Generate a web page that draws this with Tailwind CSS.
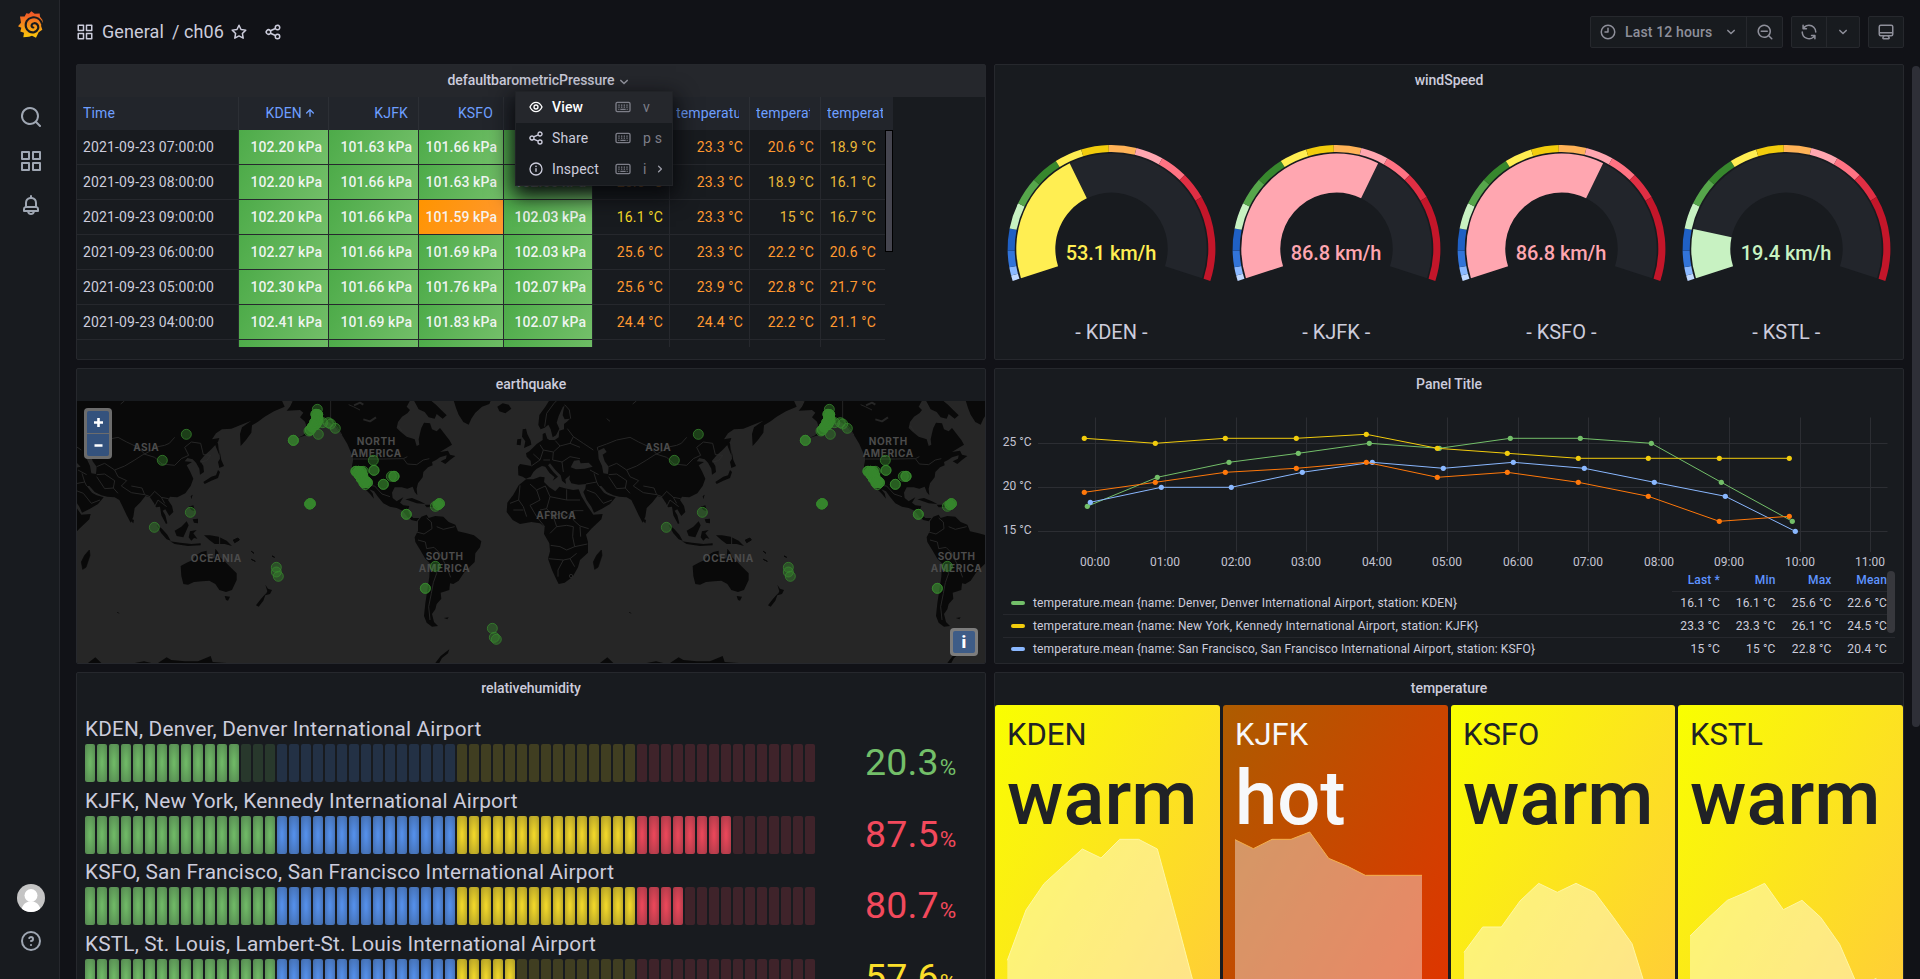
<!DOCTYPE html>
<html lang="en">
<head>
<meta charset="utf-8">
<title>ch06 - Grafana</title>
<script src="https://cdn.jsdelivr.net/npm/@tailwindcss/browser@4"></script>
</head>
<body class="w-[1920px] h-[979px] overflow-hidden bg-[#111217] text-[#ccccdc] font-['Roboto',sans-serif] text-sm tracking-[0.15px]">
<svg class="hidden">
  <symbol id="i-search" viewBox="0 0 24 24"><path d="M21.71,20.29,18,16.61A9,9,0,1,0,16.61,18l3.68,3.68a1,1,0,0,0,1.42,0A1,1,0,0,0,21.71,20.29ZM11,18a7,7,0,1,1,7-7A7,7,0,0,1,11,18Z"/></symbol>
  <symbol id="i-zoomout" viewBox="0 0 24 24"><path d="M21.71,20.29,18,16.61A9,9,0,1,0,16.61,18l3.68,3.68a1,1,0,0,0,1.42,0A1,1,0,0,0,21.71,20.29ZM11,18a7,7,0,1,1,7-7A7,7,0,0,1,11,18ZM15,10H7a1,1,0,0,0,0,2h8a1,1,0,0,0,0-2Z"/></symbol>
  <symbol id="i-apps" viewBox="0 0 24 24"><path d="M10,13H3a1,1,0,0,0-1,1v7a1,1,0,0,0,1,1h7a1,1,0,0,0,1-1V14A1,1,0,0,0,10,13ZM9,20H4V15H9ZM21,2H14a1,1,0,0,0-1,1v7a1,1,0,0,0,1,1h7a1,1,0,0,0,1-1V3A1,1,0,0,0,21,2ZM20,9H15V4h5Zm1,4H14a1,1,0,0,0-1,1v7a1,1,0,0,0,1,1h7a1,1,0,0,0,1-1V14A1,1,0,0,0,21,13Zm-1,7H15V15h5ZM10,2H3A1,1,0,0,0,2,3v7a1,1,0,0,0,1,1h7a1,1,0,0,0,1-1V3A1,1,0,0,0,10,2ZM9,9H4V4H9Z"/></symbol>
  <symbol id="i-bell" viewBox="0 0 24 24"><path d="M18,13.18V10a6,6,0,0,0-5-5.91V3a1,1,0,0,0-2,0V4.09A6,6,0,0,0,6,10v3.18A3,3,0,0,0,4,16v2a1,1,0,0,0,1,1H8.14a4,4,0,0,0,7.72,0H19a1,1,0,0,0,1-1V16A3,3,0,0,0,18,13.18ZM8,10a4,4,0,0,1,8,0v3H8Zm4,10a2,2,0,0,1-1.72-1h3.44A2,2,0,0,1,12,20Zm6-3H6V16a1,1,0,0,1,1-1H17a1,1,0,0,1,1,1Z"/></symbol>
  <symbol id="i-help" viewBox="0 0 24 24"><path d="M11.29,15.29a1.58,1.58,0,0,0-.12.15.76.76,0,0,0-.09.18.64.64,0,0,0-.06.18,1.36,1.36,0,0,0,0,.2.84.84,0,0,0,.08.38.9.9,0,0,0,.54.54.94.94,0,0,0,.76,0,.9.9,0,0,0,.54-.54A1,1,0,0,0,13,16a1,1,0,0,0-.29-.71A1,1,0,0,0,11.29,15.29ZM12,2A10,10,0,1,0,22,12,10,10,0,0,0,12,2Zm0,18a8,8,0,1,1,8-8A8,8,0,0,1,12,20ZM12,7A3,3,0,0,0,9.4,8.5a1,1,0,1,0,1.73,1A1,1,0,0,1,12,9a1,1,0,0,1,0,2,1,1,0,1,0,0,2,3,3,0,0,0,0-6Z"/></symbol>
  <symbol id="i-clock" viewBox="0 0 24 24"><path d="M12,2A10,10,0,1,0,22,12,10,10,0,0,0,12,2Zm0,18a8,8,0,1,1,8-8A8,8,0,0,1,12,20ZM12,6a1,1,0,0,0-1,1v4H8a1,1,0,0,0,0,2h4a1,1,0,0,0,1-1V7A1,1,0,0,0,12,6Z"/></symbol>
  <symbol id="i-down" viewBox="0 0 24 24"><path d="M17,9.17a1,1,0,0,0-1.41,0L12,12.71,8.46,9.17a1,1,0,0,0-1.41,0,1,1,0,0,0,0,1.42l4.24,4.24a1,1,0,0,0,1.42,0L17,10.59A1,1,0,0,0,17,9.17Z"/></symbol>
  <symbol id="i-right" viewBox="0 0 24 24"><path d="M14.83,11.29,10.59,7.05a1,1,0,0,0-1.42,0,1,1,0,0,0,0,1.41L12.71,12,9.17,15.54a1,1,0,0,0,0,1.41,1,1,0,0,0,.71.29,1,1,0,0,0,.71-.29l4.24-4.24A1,1,0,0,0,14.83,11.29Z"/></symbol>
  <symbol id="i-up" viewBox="0 0 24 24"><path d="M17.71,11.29l-5-5a1,1,0,0,0-.33-.21,1,1,0,0,0-.76,0,1,1,0,0,0-.33.21l-5,5a1,1,0,0,0,1.42,1.42L11,9.41V17a1,1,0,0,0,2,0V9.41l3.29,3.3a1,1,0,0,0,1.42,0A1,1,0,0,0,17.71,11.29Z"/></symbol>
  <symbol id="i-sync" viewBox="0 0 24 24"><path d="M19.91,15.51H15.38a1,1,0,0,0,0,2h2.4A8,8,0,0,1,4,12a1,1,0,1,0-2,0,10,10,0,0,0,16.88,7.23V21a1,1,0,0,0,2,0V16.5A1,1,0,0,0,19.91,15.51ZM12,2A10,10,0,0,0,5.12,4.77V3a1,1,0,0,0-2,0V7.5a1,1,0,0,0,1,1h4.5a1,1,0,0,0,0-2H6.22A8,8,0,0,1,20,12a1,1,0,0,0,2,0A10,10,0,0,0,12,2Z"/></symbol>
  <symbol id="i-monitor" viewBox="0 0 24 24"><path d="M19,2H5A3,3,0,0,0,2,5V15a3,3,0,0,0,3,3H7.64l-.58,1a2,2,0,0,0,0,2,2,2,0,0,0,1.75,1h6.46A2,2,0,0,0,17,21a2,2,0,0,0,0-2l-.59-1H19a3,3,0,0,0,3-3V5A3,3,0,0,0,19,2ZM8.77,20,10,18H14l1.2,2ZM20,15a1,1,0,0,1-1,1H5a1,1,0,0,1-1-1V14H20Zm0-3H4V5A1,1,0,0,1,5,4H19a1,1,0,0,1,1,1Z"/></symbol>
  <symbol id="i-share" viewBox="0 0 24 24"><path d="M18,14a4,4,0,0,0-3.08,1.48l-5.1-2.35a3.64,3.64,0,0,0,0-2.26l5.1-2.35A4,4,0,1,0,14,6a4.17,4.17,0,0,0,.07.71L8.79,9.14a4,4,0,1,0,0,5.72l5.28,2.43A4.17,4.17,0,0,0,14,18a4,4,0,1,0,4-4ZM18,4a2,2,0,1,1-2,2A2,2,0,0,1,18,4ZM6,14a2,2,0,1,1,2-2A2,2,0,0,1,6,14Zm12,6a2,2,0,1,1,2-2A2,2,0,0,1,18,20Z"/></symbol>
  <symbol id="i-star" viewBox="0 0 24 24"><path d="M12 3L14.700 8.700 21 9.500 16.500 13.900 17.600 20.200 12 17.200 6.400 20.200 7.500 13.900 3 9.500 9.300 8.700Z" fill="none" stroke="currentColor" stroke-width="2" stroke-linejoin="round"/></symbol>
  <symbol id="i-eye" viewBox="0 0 24 24"><path d="M21.92,11.6C19.9,6.91,16.1,4,12,4S4.1,6.91,2.08,11.6a1,1,0,0,0,0,.8C4.1,17.09,7.9,20,12,20s7.9-2.91,9.92-7.6A1,1,0,0,0,21.92,11.6ZM12,18c-3.17,0-6.17-2.29-7.9-6C5.83,8.29,8.83,6,12,6s6.17,2.29,7.9,6C18.17,15.71,15.17,18,12,18ZM12,8a4,4,0,1,0,4,4A4,4,0,0,0,12,8Zm0,6a2,2,0,1,1,2-2A2,2,0,0,1,12,14Z"/></symbol>
  <symbol id="i-info" viewBox="0 0 24 24"><path d="M12,2A10,10,0,1,0,22,12,10,10,0,0,0,12,2Zm0,18a8,8,0,1,1,8-8A8,8,0,0,1,12,20ZM12,10.500a1,1,0,0,0-1,1v4a1,1,0,0,0,2,0v-4A1,1,0,0,0,12,10.500Z"/><circle cx="12" cy="8" r="1.200"/></symbol>
  <symbol id="i-keyboard" viewBox="0 0 24 24"><rect x="1.500" y="5" width="21" height="14" rx="2" fill="none" stroke="currentColor" stroke-width="2"/><path d="M5 9.300h2M9 9.300h2M13 9.300h2M17 9.300h2M5 12.300h2M9 12.300h2M13 12.300h2M17 12.300h2M5 15.500h1.500M8 15.500h8M17.500 15.500H19" stroke="currentColor" stroke-width="1.800"/></symbol>
</svg>

<div class="relative flex w-[1920px] h-[979px]">
  <!-- side menu -->
  <nav class="flex w-[60px] h-full shrink-0 flex-col items-center border-r border-[#26282d] bg-[#181b1f] pl-[3px] text-[#9fa7b3]">
    <svg class="mt-[11px] mr-0.5 h-[27px] w-[25px]" viewBox="53 34 75 80">
      <defs><linearGradient id="lg" x1="0" y1="0" x2="0" y2="1"><stop offset="0.100" stop-color="#f05a28"/><stop offset="1" stop-color="#fbca0a"/></linearGradient></defs>
      <path fill="url(#lg)" d="M93 34L103 42 118 41 119 51 126 60 128 71 122 78 126 90 115 97 107 114 95 108 86 111 69 112 71 99 60 95 63 84 53 79 62 69 59 50 73 50 78 40 86 42Z"/>
      <path fill="none" stroke="#181b1f" stroke-width="6.500" stroke-linecap="round" d="M127 76C121 58 108 50 95 53C80 56 74 69 77 82C80 94 92 100 102 97C113 94 117 82 111 74C106 68 96 69 94 76C93 80 96 83 99 83"/>
    </svg>
    <svg class="mt-[67px] size-6 fill-current"><use href="#i-search"/></svg>
    <svg class="mt-5 size-6 fill-current"><use href="#i-apps"/></svg>
    <svg class="mt-5 size-6 fill-current"><use href="#i-bell"/></svg>
    <div class="mt-auto size-7 overflow-hidden rounded-full bg-[#c4c4c4]">
      <svg class="size-7 fill-white" viewBox="0 0 28 28"><circle cx="14" cy="11.500" r="6.500"/><path d="M4 28C5 20 9 17.500 14 17.500S23 20 24 28Z"/></svg>
    </div>
    <svg class="mt-[17px] mb-[26px] size-6 fill-current"><use href="#i-help"/></svg>
  </nav>

  <main class="flex min-w-0 flex-1 flex-col px-4">
    <!-- toolbar -->
    <header class="flex h-16 shrink-0 items-center justify-between">
      <div class="flex h-9 items-center text-lg tracking-[0.1px] text-[#ccccdc]">
        <svg class="size-[18px] fill-current"><use href="#i-apps"/></svg>
        <span class="ml-2">General</span><span class="ml-2">/ ch06</span>
        <svg class="ml-[6px] size-[18px] fill-current"><use href="#i-star"/></svg>
        <svg class="ml-4 size-[18px] fill-current"><use href="#i-share"/></svg>
      </div>
      <div class="flex h-8 gap-2 font-medium text-[#8e8f9a]">
        <div class="flex divide-x divide-[#26282d] rounded-xs border border-[#26282d] bg-[#181b1f]">
          <div class="flex w-[156px] items-center pl-2"><svg class="size-[18px] fill-current"><use href="#i-clock"/></svg><span class="ml-2">Last 12 hours</span><svg class="ml-[10px] size-[18px] fill-current"><use href="#i-down"/></svg></div>
          <div class="flex w-[35px] items-center justify-center"><svg class="size-[18px] fill-current"><use href="#i-zoomout"/></svg></div>
        </div>
        <div class="flex divide-x divide-[#26282d] rounded-xs border border-[#26282d] bg-[#181b1f]">
          <div class="flex w-[35px] items-center justify-center"><svg class="size-[18px] fill-current"><use href="#i-sync"/></svg></div>
          <div class="flex w-[32px] items-center justify-center"><svg class="size-[18px] fill-current"><use href="#i-down"/></svg></div>
        </div>
        <div class="flex w-9 items-center justify-center rounded-xs border border-[#26282d] bg-[#181b1f]"><svg class="size-[18px] fill-current"><use href="#i-monitor"/></svg></div>
      </div>
    </header>

    <div class="grid grid-cols-[910px_910px] grid-rows-[296px_296px_334px] gap-2">
      <!-- pressure table -->
      <section class="relative flex flex-col rounded-xs border border-[#26282d] bg-[#181b1f]">
        <h2 class="flex h-8 shrink-0 items-center justify-center bg-[#25272c] pb-0.5 pl-[19px] font-medium tracking-[-0.04px]">defaultbarometricPressure<svg class="ml-px mt-1 size-[18px] fill-[#9a9ba6]"><use href="#i-down"/></svg></h2>
        <div id="table" class="relative h-[250px] w-[816px] overflow-hidden"></div>
        <div class="absolute left-[808px] top-[65px] h-[122px] w-2 border border-black bg-[#45454f]"></div>
        <div class="absolute left-[438px] top-[26px] z-10 w-[158px] border border-[#212327] bg-[#181b1f] shadow-[0_8px_20px_3px_#08090c]">
          <div class="flex h-[31px] items-center bg-[#25272c] pb-px pl-3 font-medium text-white"><svg class="size-4 fill-current"><use href="#i-eye"/></svg><span class="ml-2 w-[63px]">View</span><svg class="size-4 text-[#7d7e88]"><use href="#i-keyboard"/></svg><span class="ml-3 font-normal text-[#7d7e88]">v</span></div>
          <div class="flex h-[31px] items-center pb-px pl-3"><svg class="size-4 fill-current"><use href="#i-share"/></svg><span class="ml-2 w-[63px]">Share</span><svg class="size-4 text-[#7d7e88]"><use href="#i-keyboard"/></svg><span class="ml-3 text-[#7d7e88]">p s</span></div>
          <div class="flex h-[31px] items-center pb-px pl-3"><svg class="size-4 fill-current"><use href="#i-info"/></svg><span class="ml-2 w-[63px]">Inspect</span><svg class="size-4 text-[#7d7e88]"><use href="#i-keyboard"/></svg><span class="ml-3 text-[#7d7e88]">i</span><svg class="ml-[5px] size-4 fill-[#9a9ba6]"><use href="#i-right"/></svg></div>
        </div>
      </section>

      <!-- wind speed gauges -->
      <section class="flex flex-col rounded-xs border border-[#26282d] bg-[#181b1f]">
        <h2 class="flex h-8 shrink-0 items-center justify-center pb-0.5 font-medium tracking-[-0.04px]">windSpeed</h2>
        <div id="gauges" class="flex pl-1"></div>
      </section>

      <!-- earthquake map -->
      <section class="relative flex flex-col overflow-hidden rounded-xs border border-[#26282d] bg-[#181b1f]">
        <h2 class="flex h-8 shrink-0 items-center justify-center pb-0.5 font-medium tracking-[-0.04px]">earthquake</h2>
        <svg class="h-[262px] w-[908px] bg-[#262626]" viewBox="21 123 2724 786">
          <defs>
            <g id="world" fill="#090909" stroke="none">
              <!-- North America -->
              <path d="M640 118L668 124 660 140 650 152 690 150 700 158 690 172 705 185 712 206 700 226 682 234 720 222 742 200 752 192 775 186 792 196 806 212 820 232 832 252 842 275 850 297 846 318 848 338 860 360 872 372 886 388 900 402 912 416 908 400 898 388 912 394 925 412 940 430 960 440 980 444 998 452 1012 470 1024 480 1040 484 1048 474 1030 474 1018 462 1014 450 1018 438 1000 436 990 428 1000 412 980 424 968 414 966 398 974 382 995 382 1012 386 1028 380 1034 396 1042 406 1040 386 1044 370 1058 352 1060 336 1074 322 1088 316 1086 306 1098 300 1110 292 1130 286 1128 296 1112 304 1126 312 1140 300 1156 288 1140 284 1134 272 1110 276 1126 266 1146 254 1138 240 1124 222 1110 204 1100 214 1086 208 1080 190 1062 188 1054 204 1050 220 1046 238 1048 254 1040 258 1034 238 1010 230 990 214 980 204 984 186 996 170 1012 160 1020 150 1010 140 1022 118Z"/>
              <path d="M1030 118L1078 118 1098 134 1116 152 1130 166 1118 176 1100 162 1094 176 1076 172 1064 156 1046 148Z"/>
              <path d="M1150 118L1264 118 1258 132 1236 140 1216 158 1204 176 1196 194 1180 186 1166 164 1158 144Z"/>
              <path d="M1282 140L1298 130 1316 134 1324 146 1306 160 1288 154Z"/>
              <path d="M1006 418L1026 414 1050 424 1066 432 1040 430ZM1064 434L1090 434 1096 440 1070 442Z"/>
              <!-- South America -->
              <path d="M1044 484L1054 470 1070 464 1076 474 1096 468 1120 470 1136 486 1156 494 1164 514 1190 520 1212 526 1234 544 1230 562 1216 580 1214 606 1198 622 1182 638 1166 662 1150 672 1140 670 1138 690 1112 698 1114 716 1100 732 1096 748 1086 762 1092 786 1104 798 1086 800 1070 788 1062 768 1066 730 1072 690 1078 650 1080 610 1066 596 1052 572 1036 546 1034 532 1044 512Z"/>
              <path d="M1122 774L1136 772 1132 778ZM1096 909L1112 888 1138 868 1134 880 1116 894 1108 909Z"/>
            </g>
            <g id="east" fill="#090909">
              <!-- Europe and Asia -->
              <path d="M60 118L46 140 28 165 25 195 32 208 44 203 55 194 62 208 68 232 78 226 88 206 80 188 86 168 98 142 104 136 100 152 98 166 104 178 120 176 110 186 102 192 102 208 88 212 86 232 74 240 58 240 52 236 46 218 38 222 38 240 20 252 8 264 -2 274 -12 280 -10 290 2 302 4 318 -30 312 -36 320 -35 346 -22 350 -12 356 2 350 10 336 20 326 36 318 46 320 58 338 74 352 68 362 84 350 70 336 54 316 60 310 76 330 92 346 96 362 108 372 106 358 120 346 118 358 124 370 146 374 168 372 166 386 160 396 170 420 184 440 192 458 216 446 240 432 257 412 236 406 222 398 206 378 214 378 230 396 250 406 268 410 290 412 304 420 314 440 326 466 338 488 346 470 350 444 368 426 382 408 396 412 408 430 414 442 426 440 430 466 444 492 448 490 442 466 434 452 442 448 454 468 466 456 462 438 450 420 456 410 478 412 502 400 518 378 526 356 516 334 506 316 522 306 500 304 508 294 524 298 534 308 544 326 546 344 558 336 556 318 546 302 560 286 580 268 600 246 604 234 582 238 594 220 612 208 640 206 666 196 700 182 672 202 666 222 668 258 684 240 700 218 702 196 722 184 740 170 768 154 800 140 790 118Z"/>
              <path d="M-22 208L-12 206 -8 222 2 242 4 254 -18 264 -14 244 -24 230ZM-38 238L-26 236 -28 256 -40 254Z"/>
              <path d="M604 268L610 300 618 318 604 324 600 306 606 296ZM600 330L606 336 600 354 580 362 560 372 556 366 580 350 594 346ZM588 246L600 250 604 286 596 266Z"/>
              <path d="M340 476L348 480 346 490 338 482ZM518 408L524 404 520 418ZM512 440L526 436 530 454 520 450ZM524 478L540 476 540 490 528 488Z"/>
              <path d="M416 494L432 506 448 524 458 542 446 538 430 520ZM456 544L486 548 520 552 548 550 548 556 510 558 470 552ZM470 512L490 500 506 484 512 496 504 514 496 532 476 528ZM516 514L536 510 526 520 538 536 528 534 520 542 512 532ZM558 526L576 526 602 530 626 542 642 558 620 552 604 552 590 552 574 540Z"/>
              <path d="M646 540L660 534 664 540 650 548ZM700 574L708 580ZM700 598L712 604ZM762 588L770 592Z" stroke="#090909" stroke-width="3"/>
              <!-- Australia and New Zealand -->
              <path d="M488 618L506 608 524 600 534 586 550 576 566 572 566 588 580 598 590 594 592 566 600 576 606 592 620 604 636 620 656 640 656 660 642 690 624 696 604 690 592 672 574 662 552 664 528 666 510 674 496 672 490 648ZM620 708L636 710 630 722 624 720ZM742 674L750 686 762 690 756 702 742 706 748 694ZM744 700L736 722 722 740 714 736 728 718Z"/>
              <!-- Africa -->
              <path d="M-12 358L10 358 30 350 44 352 42 366 58 382 76 394 88 380 110 386 130 390 146 388 154 408 172 438 190 464 218 462 214 478 184 506 168 524 174 546 174 578 150 600 144 622 128 650 104 668 86 672 78 656 66 630 54 596 60 574 58 550 42 522 44 500 30 490 4 486 -30 492 -52 480 -70 456 -68 428 -50 404 -34 376Z"/>
              <path d="M214 570L216 586 204 622 194 628 190 606 200 586ZM298 756L302 760Z" stroke="#090909" stroke-width="2"/>
              <path d="M210 909L232 892 250 909ZM350 909L378 904 400 909ZM420 909L446 892 460 900 500 904 540 904 578 888 584 906 626 909Z"/>
              <!-- inland seas -->
              <g fill="#262626"><path d="M122 322L132 302 148 300 152 310 176 308 188 320 164 326 138 328ZM204 272L222 264 230 276 218 284 224 304 236 320 234 342 220 340 216 318 206 296Z"/></g>
            </g>
            <g id="borders" fill="none" stroke="#2b2b2b" stroke-width="2.500" stroke-linejoin="round">
              <path d="M782 118V180L800 200 816 226M850 297H940L1000 296 1012 312 1040 314 1060 300 1078 296M872 372L896 376 914 378 936 402 960 410M1040 516L1062 522 1086 506 1084 486 1070 474M1044 540L1066 546 1070 566 1092 562 1108 578 1120 602 1130 620 1142 652M1082 610L1100 640 1090 668 1084 700 1076 740 1080 780M1100 500L1120 508 1154 500"/>
              <path d="M984 196L996 214M870 150L850 140 836 134M1000 296L1012 290"/>
              <path d="M880 178L900 184 918 172M852 136L870 128 880 134" stroke="#262626" stroke-width="6"/>
            </g>
            <g id="eborders" fill="none" stroke="#2d2d2d" stroke-width="2.500" stroke-linejoin="round">
              <path d="M0 372L20 390 46 378M20 390L30 420 0 436M46 378L60 410 110 420V388M110 420H150M60 410L50 446 70 470 90 460 110 470 130 452 160 452M0 436L20 470 44 500M50 446L30 450M130 452L130 480 150 498 176 506M70 470L80 500 60 520M80 500L110 496 130 500 128 530 134 560 110 570 90 560 62 556M134 560L172 552M56 596L100 600 120 596 140 580M100 600L84 630 84 650M120 596L134 620M150 500L152 530M-30 376L-34 420-60 430M-34 420L-20 440-10 470M-50 450L-20 450"/>
              <path d="M4 318L30 300 10 282M30 300L40 270 30 254M40 270L70 276 90 258 76 242M90 258L120 250 130 230 112 206M70 276L68 300 96 306 120 290 150 296M96 306L100 336M60 300L40 300M104 134L118 150 122 176M44 200L50 160 72 130 84 118M130 230L160 250 190 270M120 250L150 262"/>
              <path d="M168 372L200 366 206 378M180 330L206 344M200 366L192 340M170 390L196 400 220 430 246 420M236 344L260 342 290 362 286 384 260 386 236 350M286 384L300 400M204 272L202 262 230 252 260 240 300 232 326 246 360 262 380 282M236 320L260 310 290 330 320 318 350 300 378 282 410 292 432 312 470 316 490 296 512 286 500 262 520 246 548 250 556 284 578 286 566 302 546 306M290 330L300 350 326 362 310 378 340 398 380 404 396 410M380 404L372 384 340 378M396 410L410 394 430 412 452 416M410 440L420 420 446 440M430 412L440 430M380 282L420 260 440 256 454 250 470 232M605 530V552"/>
              <circle cx="123" cy="648" r="5"/><path d="M308 132L320 122M230 176L240 184"/>
            </g>
            <g id="names" font-family="Inter, 'Open Sans', sans-serif" font-weight="700" font-size="30" fill="#4c4c4c" text-anchor="middle">
              <text x="918" y="255" textLength="116">NORTH</text><text x="918" y="291" textLength="152">AMERICA</text>
              <text x="1123" y="600" textLength="112">SOUTH</text><text x="1123" y="637" textLength="153">AMERICA</text>
              <text x="1458" y="477" textLength="118">AFRICA</text><text x="1764" y="272" textLength="76">ASIA</text><text x="1974" y="606" textLength="151">OCEANIA</text>
            </g>
          </defs>
          <g id="tiles"></g>
          <g id="quakes"></g>
        </svg>
        <div class="absolute left-[7px] top-[39px] flex flex-col gap-px rounded-[4px] bg-[#6c6c6c] p-[3px] font-bold text-white">
          <div class="flex size-[22px] items-center justify-center rounded-t-xs bg-[#34527d]"><svg class="size-[9px]" viewBox="0 0 9 9"><path d="M4.500 0V9M0 4.500H9" stroke="#fff" stroke-width="2.600"/></svg></div>
          <div class="flex size-[22px] items-center justify-center rounded-b-xs bg-[#34527d]"><svg class="size-[9px]" viewBox="0 0 9 9"><path d="M0.500 4.500H8.500" stroke="#fff" stroke-width="2.600"/></svg></div>
        </div>
        <div class="absolute bottom-[7px] right-[7px] rounded-[4px] bg-[#7d7d7d] p-[3px]"><div class="flex size-[22px] items-center justify-center rounded-xs bg-[#3e5c87] text-[17px] font-black leading-none text-white">i</div></div>
      </section>

      <!-- time series -->
      <section class="flex flex-col rounded-xs border border-[#26282d] bg-[#181b1f]">
        <h2 class="flex h-8 shrink-0 items-center justify-center pb-0.5 font-medium tracking-[-0.04px]">Panel Title</h2>
        <svg class="h-[169px] w-[908px] shrink-0" viewBox="995 401 908 169">
          <g id="plot"></g>
        </svg>
        <div class="relative ml-2 w-[892px] text-xs">
          <div class="ml-[669px] grid h-[22px] grid-cols-[48px_55.500px_56px_55.500px] border-b border-[#26282d] pb-0.5 text-right font-medium leading-[20px] text-[#5f94ff]"><span>Last *</span><span>Min</span><span>Max</span><span>Mean</span></div>
          <div id="legend"></div>
          <div class="absolute right-0 top-[1px] h-[62px] w-2 rounded-full bg-[#37383d]"></div>
        </div>
      </section>

      <!-- humidity bars -->
      <section class="flex flex-col rounded-xs border border-[#26282d] bg-[#181b1f]">
        <h2 class="flex h-8 shrink-0 items-center justify-center pb-0.5 font-medium tracking-[-0.04px]">relativehumidity</h2>
        <div id="bars" class="flex flex-col pl-2 pt-[7px]"></div>
      </section>

      <!-- temperature stats -->
      <section class="flex flex-col rounded-xs border border-[#26282d] bg-[#181b1f]">
        <h2 class="flex h-8 shrink-0 items-center justify-center pb-0.5 font-medium tracking-[-0.04px]">temperature</h2>
        <div class="grid h-[300px] grid-cols-[225px_225px_224px_225px] gap-[3px] tracking-normal">
          <div class="relative overflow-hidden rounded-[3px] bg-[linear-gradient(120deg,#f9ff00,#ffcc39)] text-[#202226]">
            <svg class="absolute inset-0 h-full w-full" viewBox="15 120 675 900"><path d="M52 1030V886L108 735 162 656 220 603 277 552 333 579 389 523 446 523 502 552 558 757 614 968 620 1030Z" fill="#fff" fill-opacity=".42"/><path d="M52 886L108 735 162 656 220 603 277 552 333 579 389 523 446 523 502 552 558 757 614 968" fill="none" stroke="#fff7a0" stroke-width="3"/></svg>
            <div class="relative pl-3 pt-3"><div class="text-[31px] leading-[36px] font-normal">KDEN</div><div class="text-[76px] leading-[90px] font-medium">warm</div></div>
          </div>
          <div class="relative overflow-hidden rounded-[3px] bg-[linear-gradient(120deg,#ad5c00,#e03400)] text-[#f7f8fa]">
            <svg class="absolute inset-0 h-full w-full" viewBox="699 120 675 900"><path d="M735 1030V524L790 551 846 523 903 523 959 501 1016 580 1073 604 1126 631 1296 631V1030Z" fill="#fff" fill-opacity=".4"/><path d="M735 524L790 551 846 523 903 523 959 501 1016 580 1073 604 1126 631 1296 631" fill="none" stroke="#f5b04c" stroke-width="3"/></svg>
            <div class="relative pl-3 pt-3"><div class="text-[31px] leading-[36px] font-normal">KJFK</div><div class="text-[76px] leading-[90px] font-medium">hot</div></div>
          </div>
          <div class="relative overflow-hidden rounded-[3px] bg-[linear-gradient(120deg,#f9ff00,#ffcc39)] text-[#202226]">
            <svg class="absolute inset-0 h-full w-full" viewBox="33 120 672 900"><path d="M72 1030V862L128 786 184 786 240 708 296 655 352 682 408 655 464 682 520 757 576 836 609 942 636 1030Z" fill="#fff" fill-opacity=".42"/><path d="M72 862L128 786 184 786 240 708 296 655 352 682 408 655 464 682 520 757 576 836 609 942 636 1030" fill="none" stroke="#fff7a0" stroke-width="3"/></svg>
            <div class="relative pl-3 pt-3"><div class="text-[31px] leading-[36px] font-normal">KSFO</div><div class="text-[76px] leading-[90px] font-medium">warm</div></div>
          </div>
          <div class="relative overflow-hidden rounded-[3px] bg-[linear-gradient(120deg,#f9ff00,#ffcc39)] text-[#202226]">
            <svg class="absolute inset-0 h-full w-full" viewBox="714 120 675 900"><path d="M750 1030V813L806 758 862 706 918 682 974 655 1030 734 1086 706 1142 757 1199 838 1244 942 1255 965 1309 940V1030Z" fill="#fff" fill-opacity=".42"/><path d="M750 813L806 758 862 706 918 682 974 655 1030 734 1086 706 1142 757 1199 838 1244 942 1255 965 1309 940" fill="none" stroke="#fff7a0" stroke-width="3"/></svg>
            <div class="relative pl-3 pt-3"><div class="text-[31px] leading-[36px] font-normal">KSTL</div><div class="text-[76px] leading-[90px] font-medium">warm</div></div>
          </div>
        </div>
      </section>
    </div>
  </main>
  <div class="absolute right-0 top-[66px] h-[661px] w-2 rounded-full bg-[#2e2f37]"></div>
</div>

<script>
const $ = id => document.getElementById(id);

// Pressure / temperature table; cells fully behind the open menu stay empty
const O = 'text-[#ff9830]', Y = 'text-[#eab839]', B = 'text-[#fade2a]';
const rows = [
  ['2021-09-23 07:00:00','102.20','101.63','101.66','',['',O],['23.3',O],['20.6',O],['18.9',Y]],
  ['2021-09-23 08:00:00','102.20','101.66','101.63','102.00',['20.6',O],['23.3',O],['18.9',Y],['16.1',Y]],
  ['2021-09-23 09:00:00','102.20','101.66','101.59','102.03',['16.1',B],['23.3',O],['15',Y],['16.7',Y]],
  ['2021-09-23 06:00:00','102.27','101.66','101.69','102.03',['25.6',O],['23.3',O],['22.2',O],['20.6',O]],
  ['2021-09-23 05:00:00','102.30','101.66','101.76','102.07',['25.6',O],['23.9',O],['22.8',O],['21.7',O]],
  ['2021-09-23 04:00:00','102.41','101.69','101.83','102.07',['24.4',O],['24.4',O],['22.2',O],['21.1',O]],
  ['','','','','',['',O],['',O],['',O],['',O]]
];
let t = `<div class="grid grid-cols-[162px_90px_90px_85px_89px_77px_80px_71px_72px] h-[33px] bg-[#22252b] text-[#6e9fff] leading-[32px] whitespace-nowrap">`;
['Time','KDEN','KJFK','KSFO','','','temperature','temperature','temperature'].forEach((h, i) => {
  const right = i > 0 && i < 5;
  t += `<div class="${i < 8 ? 'border-r border-[#2c2f35]' : ''} pl-1.5 pr-[10px]"><div class="flex overflow-hidden ${right ? 'justify-end' : ''}">${h}${i === 1 ? '<svg class="mt-2 size-4 fill-current"><use href="#i-up"/></svg>' : ''}</div></div>`;
});
t += '</div>';
for (const r of rows) {
  t += `<div class="grid grid-cols-[162px_90px_90px_85px_89px_77px_80px_71px_64px] h-[35px] leading-[34px] whitespace-nowrap"><div class="border-r border-b border-[#26282d] pl-1.5">${r[0]}</div>`;
  for (let i = 1; i < 5; i++) {
    const bg = r[i] === '101.59' ? 'bg-[linear-gradient(120deg,#ff9400,#ff9830)]' : 'bg-[linear-gradient(120deg,#4dab49,#73bf69)]';
    t += `<div class="border-r border-b border-[#26282d] bg-clip-padding pr-1.5 text-right font-medium tracking-[0.06px] text-[#f7f8fa]/95 ${bg}">${r[i] ? r[i] + ' kPa' : ''}</div>`;
  }
  for (let i = 5; i < 9; i++)
    t += `<div class="border-b border-[#26282d] text-right ${i < 8 ? 'border-r pr-1.5' : 'pr-[9px]'} ${r[i][1]}">${r[i][0] ? r[i][0] + ' °C' : ''}</div>`;
  t += '</div>';
}
$('table').innerHTML = t;

// Gauges: 216° sweep, scale 0..140
const pt = (r, v) => { const a = (162 + v / 140 * 216) * Math.PI / 180; return (112.5 + r * Math.cos(a)).toFixed(2) + ' ' + (151.8 + r * Math.sin(a)).toFixed(2); };
const arc = (r0, r1, a, b, c) => { const big = (b - a) / 140 * 216 > 180 ? 1 : 0; return `<path fill="${c}" d="M${pt(r1,a)}A${r1} ${r1} 0 ${big} 1 ${pt(r1,b)}L${pt(r0,b)}A${r0} ${r0} 0 ${big} 0 ${pt(r0,a)}Z"/>`; };
const th = [[0,'#C0D8FF'],[2,'#8AB8FF'],[5,'#3274D9'],[11,'#1F60C4'],[19,'#C8F2C2'],[28.5,'#56A64B'],[38.7,'#37872D'],[49,'#FFEE52'],[59,'#F2CC0C'],[69,'#FFB357'],[79,'#FFA6B0'],[89,'#FF7383'],[99,'#E02F44'],[109,'#C4162A'],[140,'']];
$('gauges').innerHTML = [['KDEN',53.1,'#FFEE52'],['KJFK',86.8,'#FFA6B0'],['KSFO',86.8,'#FFA6B0'],['KSTL',19.4,'#C8F2C2']].map(([n, v, c]) => {
  let s = arc(56.2, 95.2, 0, 140, '#22252b') + arc(56.2, 95.2, 0, v, c);
  for (let i = 0; i < 14; i++) s += arc(96.8, 103.9, th[i][0], th[i + 1][0], th[i][1]);
  return `<svg class="h-[260px] w-[225px]" viewBox="0 0 225 260">${s}<text x="112" y="163" text-anchor="middle" font-size="20" font-weight="500" letter-spacing="-0.080" fill="${c}">${v} km/h</text><text x="112.300" y="242" text-anchor="middle" font-size="20" letter-spacing="0" fill="#ccccdc">- ${n} -</text></svg>`;
}).join('');

// Map: single quakes drawn once, dense swarms drawn several times so they build up to solid green
$('tiles').innerHTML = [-1536, 0, 1536].map(x => `<g transform="translate(${x} 0)"><use href="#world"/><use href="#borders"/><g transform="translate(1380 0)"><use href="#east"/><use href="#eborders"/></g><use href="#names"/></g>`).join('');
const single = [[349,223],[277,301],[361,457],[253,502],[742,148],[745,223],[758,188],[775,188],[782,192],[796,205],[910,301],[912,331],[912,331],[940,373],[940,373],[964,349],[1096,439],[1096,619],[1066,685],[1066,685],[1267,805],[1273,832],[1279,838],[619,622],[619,636],[625,649],[886,374],[1009,463],[1009,463],[717,213],[880,334]];
const swarm = [[670,241],[738,163],[743,164],[742,170],[740,176],[744,178],[738,182],[742,186],[734,188],[737,194],[732,196],[727,201],[721,210],[858,334],[862,338],[866,334],[870,340],[874,335],[868,346],[874,350],[878,347],[874,356],[880,360],[884,364],[888,364],[892,368],[882,368],[972,349],[719,432],[721,431],[1104,434],[1108,431]];
const q = [...single, ...swarm, ...swarm, ...swarm];
$('quakes').innerHTML = [0, 1536].map(d => q.map(([x, y]) => `<circle cx="${x + d}" cy="${y}" r="15" fill="#37872d" fill-opacity=".42" stroke="#37872d" stroke-opacity=".9" stroke-width="2.500"/>`).join('')).join('');

// Time series
let p = '';
for (let i = 0; i < 12; i++) {
  const x = Math.floor(1095.3 + i * 70.47) + .5;
  p += `<path d="M${x} 417.500V552" stroke="#2c2e33"/><text x="${x - .5}" y="566" text-anchor="middle" font-size="12" letter-spacing="0" fill="#c4c4d2">${String(i).padStart(2, '0')}:00</text>`;
}
[[25,443.5],[20,487.5],[15,531.5]].forEach(([v, y]) => p += `<path d="M1038 ${y}H1887.500" stroke="#2c2e33"/><text x="1031.700" y="${y + 2.5}" text-anchor="end" font-size="12" letter-spacing="0.050" fill="#c4c4d2">${v} °C</text>`);
const series = [
  ['#73BF69',[[292,439],[502,352],[717,307],[925,280],[1138,250],[1348,265],[1561,235],[1771,235],[1984,250],[2194,367],[2407,484]]],
  ['#F2CC0C',[[283,235],[496,250],[706,235],[919,235],[1129,223],[1342,265],[1552,280],[1765,295],[1975,295],[2188,295],[2398,295]]],
  ['#8AB8FF',[[301,427],[514,382],[724,382],[937,337],[1147,307],[1360,325],[1570,307],[1783,325],[1993,367],[2206,409],[2416,514]]],
  ['#FF780A',[[283,397],[496,367],[706,337],[919,325],[1129,307],[1342,352],[1552,337],[1765,367],[1975,409],[2188,484],[2398,469]]]
];
for (const [c, a] of series) {
  const m = a.map(([x, y]) => [(990 + x / 3).toFixed(1), (360 + y / 3).toFixed(1)]);
  p += `<polyline fill="none" stroke="${c}" points="${m.map(z => z.join(',')).join(' ')}"/>` + m.map(z => `<circle cx="${z[0]}" cy="${z[1]}" r="2.600" fill="${c}"/>`).join('');
}
$('plot').innerHTML = p;
$('legend').innerHTML = [
  ['#73BF69','Denver, Denver International Airport, station: KDEN','16.1','16.1','25.6','22.6'],
  ['#F2CC0C','New York, Kennedy International Airport, station: KJFK','23.3','23.3','26.1','24.5'],
  ['#8AB8FF','San Francisco, San Francisco International Airport, station: KSFO','15','15','22.8','20.4']
].map((r, i) => `<div class="grid h-[23px] grid-cols-[669px_48px_55.500px_56px_55.500px] items-center text-right ${i < 2 ? 'border-b border-[#26282d]' : 'pb-px'}"><div class="flex items-center gap-2 pl-2"><i class="h-1 w-[14px] rounded-xs" style="background:${r[0]}"></i><span>temperature.mean {name: ${r[1]}}</span></div>${r.slice(2).map(v => `<span>${v} °C</span>`).join('')}</div>`).join('');

// Humidity LED bars
const col = i => i < 16 ? [115,191,105] : i < 31 ? [87,148,242] : i < 46 ? [250,222,42] : [242,73,92];
$('bars').innerHTML = [
  ['KDEN, Denver, Denver International Airport','20.3',13,'#73BF69'],
  ['KJFK, New York, Kennedy International Airport','87.5',54,'#F2495C'],
  ['KSFO, San Francisco, San Francisco International Airport','80.7',50,'#F2495C'],
  ['KSTL, St. Louis, Lambert-St. Louis International Airport','57.6',36,'#FADE2A']
].map(([n, v, lit, c]) => {
  let s = '';
  for (let i = 0; i < 61; i++) {
    const k = col(i).join(',');
    s += `<i class="h-full w-[10px] rounded-xs" style="background:${i < lit ? `radial-gradient(rgba(${k},.95) 10%,rgba(${k},.65))` : `rgba(${k},.18)`}"></i>`;
  }
  return `<div class="h-[71.67px]"><div class="h-8 text-[20.8px] leading-[35px] tracking-[0.17px]">${n}</div><div class="flex h-[38px]"><div class="flex shrink-0 gap-0.5">${s}</div><div class="ml-[50px] flex shrink-0 items-baseline whitespace-nowrap text-[37.500px] leading-[37px]" style="color:${c}">${v}<span class="ml-px text-[22.500px]">%</span></div></div></div>`;
}).join('');
</script>
</body>
</html>
